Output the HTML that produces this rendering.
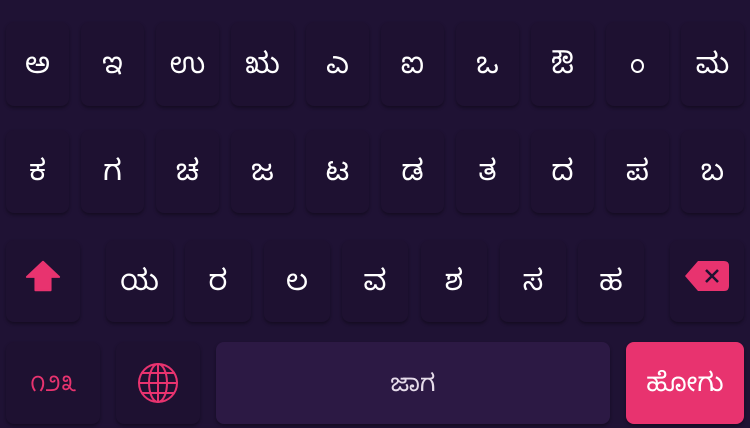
<!DOCTYPE html>
<html><head><meta charset="utf-8"><style>
html,body{margin:0;padding:0;width:750px;height:428px;overflow:hidden;background:#1f1234;}
.k{position:absolute;box-sizing:border-box;background:#1e1131;border-radius:8px;box-shadow:0 2px 3px rgba(0,0,0,0.35);color:#fff;display:flex;align-items:center;justify-content:center;font-family:"Noto Sans Kannada","Liberation Sans",sans-serif;font-size:29px;padding-top:10px;}
.i{padding-top:0;}
</style></head><body>
<div class="k" style="left:6px;top:22px;width:63px;height:84px">ಅ</div>
<div class="k" style="left:81px;top:22px;width:63px;height:84px">ಇ</div>
<div class="k" style="left:156px;top:22px;width:63px;height:84px">ಉ</div>
<div class="k" style="left:231px;top:22px;width:63px;height:84px">ಋ</div>
<div class="k" style="left:306px;top:22px;width:63px;height:84px">ಎ</div>
<div class="k" style="left:381px;top:22px;width:63px;height:84px">ಐ</div>
<div class="k" style="left:456px;top:22px;width:63px;height:84px">ಒ</div>
<div class="k" style="left:531px;top:22px;width:63px;height:84px">ಔ</div>
<div class="k i" style="left:606px;top:22px;width:63px;height:84px"><span style="display:block;width:9px;height:10px;border:2px solid #fff;border-radius:50%;margin-top:4px"></span></div>
<div class="k" style="left:681px;top:22px;width:63px;height:84px">ಮ</div>

<div class="k" style="left:6px;top:130px;width:63px;height:83px">ಕ</div>
<div class="k" style="left:81px;top:130px;width:63px;height:83px">ಗ</div>
<div class="k" style="left:156px;top:130px;width:63px;height:83px">ಚ</div>
<div class="k" style="left:231px;top:130px;width:63px;height:83px">ಜ</div>
<div class="k" style="left:306px;top:130px;width:63px;height:83px">ಟ</div>
<div class="k" style="left:381px;top:130px;width:63px;height:83px">ಡ</div>
<div class="k" style="left:456px;top:130px;width:63px;height:83px">ತ</div>
<div class="k" style="left:531px;top:130px;width:63px;height:83px">ದ</div>
<div class="k" style="left:606px;top:130px;width:63px;height:83px">ಪ</div>
<div class="k" style="left:681px;top:130px;width:63px;height:83px">ಬ</div>

<div class="k i" style="left:6px;top:240px;width:74px;height:82px"><svg width="38" height="34" viewBox="0 0 40 34" style="margin-top:-10px"><path d="M20 2 L37 18 H28 V32 H12 V18 H3 Z" fill="#e8336f" stroke="#e8336f" stroke-width="2" stroke-linejoin="round"/></svg></div>
<div class="k" style="left:106px;top:240px;width:67px;height:82px">ಯ</div>
<div class="k" style="left:185px;top:240px;width:66px;height:82px">ರ</div>
<div class="k" style="left:264px;top:240px;width:66px;height:82px">ಲ</div>
<div class="k" style="left:342px;top:240px;width:66px;height:82px">ವ</div>
<div class="k" style="left:421px;top:240px;width:66px;height:82px">ಶ</div>
<div class="k" style="left:500px;top:240px;width:66px;height:82px">ಸ</div>
<div class="k" style="left:578px;top:240px;width:66px;height:82px">ಹ</div>
<div class="k i" style="left:670px;top:240px;width:74px;height:82px"><svg width="46" height="32" viewBox="0 0 46 32" style="margin-top:-10px"><path d="M14 1 H40 Q45 1 45 6 V26 Q45 31 40 31 H14 L1 16 Z" fill="#e8336f"/><path d="M22 10 L34 22 M34 10 L22 22" stroke="#1e1131" stroke-width="2.5"/></svg></div>

<div class="k" style="left:6px;top:342px;width:94px;height:82px;color:#e8336f;font-size:22px">೧೨೩</div>
<div class="k i" style="left:116px;top:342px;width:84px;height:82px"><svg width="42" height="42" viewBox="0 0 42 42" fill="none" stroke="#e8336f" stroke-width="2"><circle cx="21" cy="21" r="19"/><ellipse cx="21" cy="21" rx="9" ry="19"/><path d="M21 2 V40 M2 21 H40 M5 11 H37 M5 31 H37"/></svg></div>
<div class="k" style="left:216px;top:342px;width:394px;height:82px;background:#2c1944;color:#e6dcea;font-size:24px">ಜಾಗ</div>
<div class="k" style="left:626px;top:342px;width:118px;height:82px;background:#e8336f;font-size:26px">ಹೋಗು</div>
</body></html>
